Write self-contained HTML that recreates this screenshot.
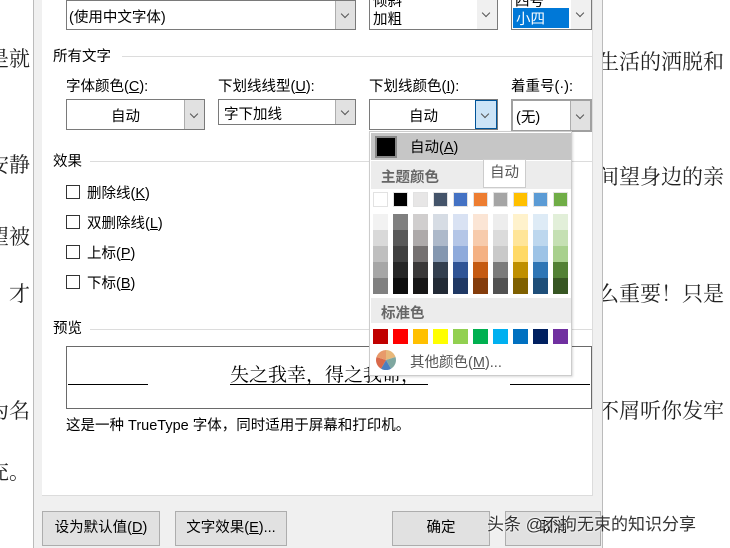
<!DOCTYPE html>
<html><head><meta charset="utf-8"><style>
*{margin:0;padding:0;box-sizing:border-box}
body{width:730px;height:548px;overflow:hidden;background:#fff;position:relative;font-family:"Liberation Sans","Noto Sans CJK SC",sans-serif;font-size:14.5px;color:#000}
.a{position:absolute;white-space:nowrap}
.pg{position:absolute;font-family:"Noto Serif CJK SC","Liberation Serif",serif;font-size:21px;color:#222;white-space:nowrap}
.cb{position:absolute;border:1px solid #7a7a7a;background:#fff}
.btn{position:absolute;top:0;right:0;bottom:0;width:20px;background:#e1e1e1;border-left:1px solid #adadad}
.btn:after{content:"";position:absolute;left:6px;top:50%;margin-top:-4px;width:5px;height:5px;border-right:1px solid #555;border-bottom:1px solid #555;transform:rotate(45deg)}
.sep{position:absolute;height:1px;background:#dcdcdc}
.chk{position:absolute;width:14px;height:14px;border:1px solid #333;background:#fff}
.b{position:absolute;top:511px;height:35px;background:#e1e1e1;border:1px solid #adadad;text-align:center;line-height:33px;font-size:14.5px}
.sw{position:absolute;width:15px}
</style></head><body>
<div class="pg" style="left:-12px;top:43px">是就</div>
<div class="pg" style="left:-12px;top:149px">安静</div>
<div class="pg" style="left:-12px;top:221px">望被</div>
<div class="pg" style="left:-12px;top:278px">，才</div>
<div class="pg" style="left:-12px;top:395px">为名</div>
<div class="pg" style="left:-12px;top:456px">充。</div>
<div class="pg" style="left:598px;top:46px">生活的洒脱和</div>
<div class="pg" style="left:598px;top:161px">间望身边的亲</div>
<div class="pg" style="left:598px;top:278px">么重要！只是</div>
<div class="pg" style="left:598px;top:395px">不屑听你发牢</div>

<div class="a" style="left:33px;top:0;width:570px;height:548px;background:#f0f0f0;border-left:1px solid #bbb;border-right:1px solid #bbb"></div>
<div class="a" style="left:42px;top:0;width:551px;height:496px;background:#fff;border-bottom:1px solid #dcdcdc;border-right:1px solid #dcdcdc"></div>

<div class="cb" style="left:66px;top:0;width:290px;height:30px"><span class="a" style="left:2px;top:5px">(使用中文字体)</span><div class="btn"></div></div>
<div class="cb" style="left:369px;top:-2px;width:129px;height:32px"><span class="a" style="left:3px;top:-9px">倾斜</span><span class="a" style="left:3px;top:9px">加粗</span><div class="btn" style="background:#f0f0f0;border-left:none"></div></div>
<div class="cb" style="left:511px;top:-2px;width:81px;height:32px"><span class="a" style="left:3px;top:-9px">四号</span><span class="a" style="left:1px;top:9px;width:56px;height:20px;background:#0078d7;color:#fff;padding-left:3px">小四</span><div class="btn" style="background:#f0f0f0;border-left:none"></div></div>

<div class="a" style="left:53px;top:45px">所有文字</div><div class="sep" style="left:122px;top:56px;width:470px"></div>
<div class="a" style="left:66px;top:75px">字体颜色(<u>C</u>):</div>
<div class="a" style="left:218px;top:75px">下划线线型(<u>U</u>):</div>
<div class="a" style="left:369px;top:75px">下划线颜色(<u>I</u>):</div>
<div class="a" style="left:511px;top:75px">着重号(·):</div>
<div class="cb" style="left:66px;top:99px;width:139px;height:31px"><span class="a" style="left:44px;top:5px">自动</span><div class="btn"></div></div>
<div class="cb" style="left:218px;top:99px;width:138px;height:26px"><span class="a" style="left:5px;top:3px">字下加线</span><div class="btn"></div></div>
<div class="cb" style="left:369px;top:99px;width:129px;height:31px"><span class="a" style="left:39px;top:5px">自动</span><div class="btn" style="background:#cce4f7;border:1px solid #005499;width:22px"></div></div>
<div class="cb" style="left:511px;top:99px;width:81px;height:33px;border:2px solid #a0a0a0"><span class="a" style="left:3px;top:5px">(无)</span><div class="btn"></div></div>

<div class="a" style="left:53px;top:150px">效果</div><div class="sep" style="left:90px;top:161px;width:502px"></div>
<div class="chk" style="left:66px;top:185px"></div><div class="a" style="left:87px;top:182px">删除线(<u>K</u>)</div>
<div class="chk" style="left:66px;top:215px"></div><div class="a" style="left:87px;top:212px">双删除线(<u>L</u>)</div>
<div class="chk" style="left:66px;top:245px"></div><div class="a" style="left:87px;top:242px">上标(<u>P</u>)</div>
<div class="chk" style="left:66px;top:275px"></div><div class="a" style="left:87px;top:272px">下标(<u>B</u>)</div>

<div class="a" style="left:53px;top:317px">预览</div><div class="sep" style="left:90px;top:329px;width:502px"></div>
<div class="a" style="left:66px;top:346px;width:526px;height:63px;border:1px solid #6a6a6a;background:#fff"></div>
<div class="a" style="left:68px;top:384px;width:80px;height:1px;background:#000"></div>
<div class="a" style="left:510px;top:384px;width:80px;height:1px;background:#000"></div>
<div class="a" style="left:230px;top:363px;width:198px;font-family:'Noto Serif CJK SC','Liberation Serif',serif;font-size:19px;border-bottom:1px solid #000;line-height:21px">失之我幸，得之我命，</div>
<div class="a" style="left:66px;top:414px">这是一种 TrueType 字体，同时适用于屏幕和打印机。</div>

<div class="b" style="left:42px;width:118px">设为默认值(<u>D</u>)</div>
<div class="b" style="left:175px;width:112px">文字效果(<u>E</u>)...</div>
<div class="b" style="left:392px;width:98px">确定</div>
<div class="b" style="left:505px;width:96px">取消</div>
<div class="a" style="left:487px;top:510px;font-size:17px;color:#333;text-shadow:0 0 2px #fff,0 0 2px #fff">头条 @不拘无束的知识分享</div>

<div class="a" style="left:369px;top:131px;width:203px;height:245px;background:#fff;border:1px solid #ccc;box-shadow:1px 1px 2px rgba(0,0,0,.15)">
<div class="a" style="left:1px;top:1px;width:200px;height:27px;background:#c6c6c6"></div>
<div class="a" style="left:5px;top:4px;width:22px;height:22px;background:#000;border:2px solid #888"></div>
<div class="a" style="left:40px;top:4px">自动(<u>A</u>)</div>
<div class="a" style="left:1px;top:29px;width:200px;height:28px;background:#ececec"></div>
<div class="a" style="left:11px;top:34px;color:#666;font-weight:bold">主题颜色</div>
<div class="a" style="left:1px;top:166px;width:200px;height:25px;background:#ececec"></div>
<div class="a" style="left:11px;top:170px;color:#666;font-weight:bold">标准色</div>
<svg class="a" style="left:6px;top:218px" width="20" height="20" viewBox="-10 -10 20 20"><path d="M0 0L0-10A10 10 0 0 1 9.5-3Z" fill="#e8b87a"/><path d="M0 0L9.5-3A10 10 0 0 1 5 8.7Z" fill="#7fa7a0"/><path d="M0 0L5 8.7A10 10 0 0 1-5 8.7Z" fill="#4b7fc0"/><path d="M0 0L-5 8.7A10 10 0 0 1-9.5-3Z" fill="#d9694a"/><path d="M0 0L-9.5-3A10 10 0 0 1 0-10Z" fill="#e89a6a"/></svg>
<div class="a" style="left:40px;top:219px;color:#555">其他颜色(<u>M</u>)...</div>
<div id="sw"></div>
</div>
<div class="a" style="left:483px;top:159px;width:43px;height:29px;background:#fff;border:1px solid #ccc;text-align:center;line-height:27px;color:#555">自动</div>
<script>
var th=["ffffff","000000","e7e6e6","44546a","4472c4","ed7d31","a5a5a5","ffc000","5b9bd5","70ad47"];
var sh=[["f2f2f2","d9d9d9","bfbfbf","a6a6a6","808080"],["7f7f7f","595959","404040","262626","0d0d0d"],["d0cece","aeaaaa","757171","3a3838","171616"],["d6dce4","adb9ca","8497b0","333f4f","222a35"],["d9e2f3","b4c6e7","8eaadb","2f5496","1f3864"],["fbe5d5","f7cbac","f4b183","c55a11","843c0b"],["ededed","dbdbdb","c9c9c9","7b7b7b","525252"],["fff2cc","ffe599","ffd966","bf8f00","7f6000"],["deebf6","bdd7ee","9dc3e6","2e75b5","1e4e79"],["e2efd9","c5e0b3","a8d08d","538135","375623"]];
var st=["c00000","ff0000","ffc000","ffff00","92d050","00b050","00b0f0","0070c0","002060","7030a0"];
var h="";
for(var i=0;i<10;i++){var x=3+i*20;
h+='<div class="sw" style="left:'+x+'px;top:60px;height:15px;background:#'+th[i]+';border:1px solid #e2e2e2"></div>';
for(var j=0;j<5;j++)h+='<div class="sw" style="left:'+x+'px;top:'+(82+j*16)+'px;height:16px;background:#'+sh[i][j]+'"></div>';
h+='<div class="sw" style="left:'+x+'px;top:197px;height:15px;background:#'+st[i]+'"></div>';}
document.getElementById("sw").outerHTML=h;
</script>
</body></html>
